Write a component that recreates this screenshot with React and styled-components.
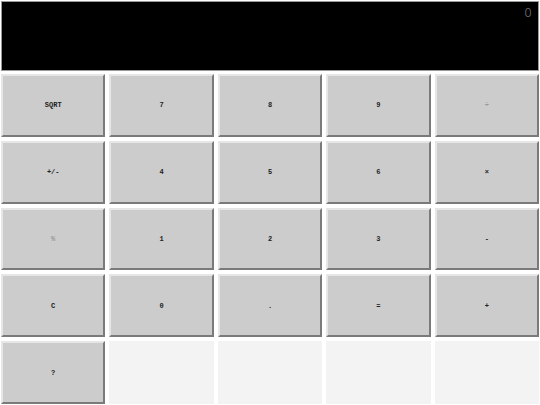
import React from "react";
import styled, { createGlobalStyle } from "styled-components";

const Global = createGlobalStyle`
  html, body {
    margin: 0;
    padding: 0;
    background: #ffffff;
  }
`;

const keys = [
  "SQRT", "7", "8", "9", "÷",
  "+/-", "4", "5", "6", "×",
  "%", "1", "2", "3", "-",
  "C", "0", ".", "=", "+",
  "?", null, null, null, null
];

export default function App() {
  return (
    <>
      <Global />
      <Calc>
        <Screen>
          <Value>0</Value>
        </Screen>
        <Keys>
          {keys.map((k, i) =>
            k === null ? <Blank key={i} /> : <Key key={i} $faint={k === "÷" || k === "%"}>{k}</Key>
          )}
        </Keys>
      </Calc>
    </>
  );
}

const Calc = styled.div`
  width: 540px;
  height: 405px;
  box-sizing: border-box;
  padding: 1px;
  display: flex;
  flex-direction: column;
  gap: 3px;
`;

const Screen = styled.div`
  height: 70px;
  flex-shrink: 0;
  box-sizing: border-box;
  background: #000;
  border: 1px solid #9a9a9a;
  display: flex;
  justify-content: flex-end;
  align-items: flex-start;
  padding: 4px 6px 0 0;
`;

const Value = styled.span`
  font-family: "DejaVu Sans", sans-serif;
  font-weight: 300;
  font-size: 12px;
  color: #9c9c9c;
  line-height: 14px;
`;

const Keys = styled.div`
  flex: 1;
  display: grid;
  grid-template-columns: repeat(5, 1fr);
  grid-template-rows: repeat(5, 1fr);
  gap: 4px;
`;

const Key = styled.button`
  margin: 0;
  padding: 0;
  background: #cccccc;
  border: 2px solid;
  border-color: #e6e6e6 #7a7a7a #7a7a7a #e6e6e6;
  font-family: "Liberation Mono", monospace;
  font-weight: bold;
  font-size: 7px;
  color: ${p => (p.$faint ? "#9a9a9a" : "#222222")};
`;

const Blank = styled.div`
  background: #f3f3f3;
`;
